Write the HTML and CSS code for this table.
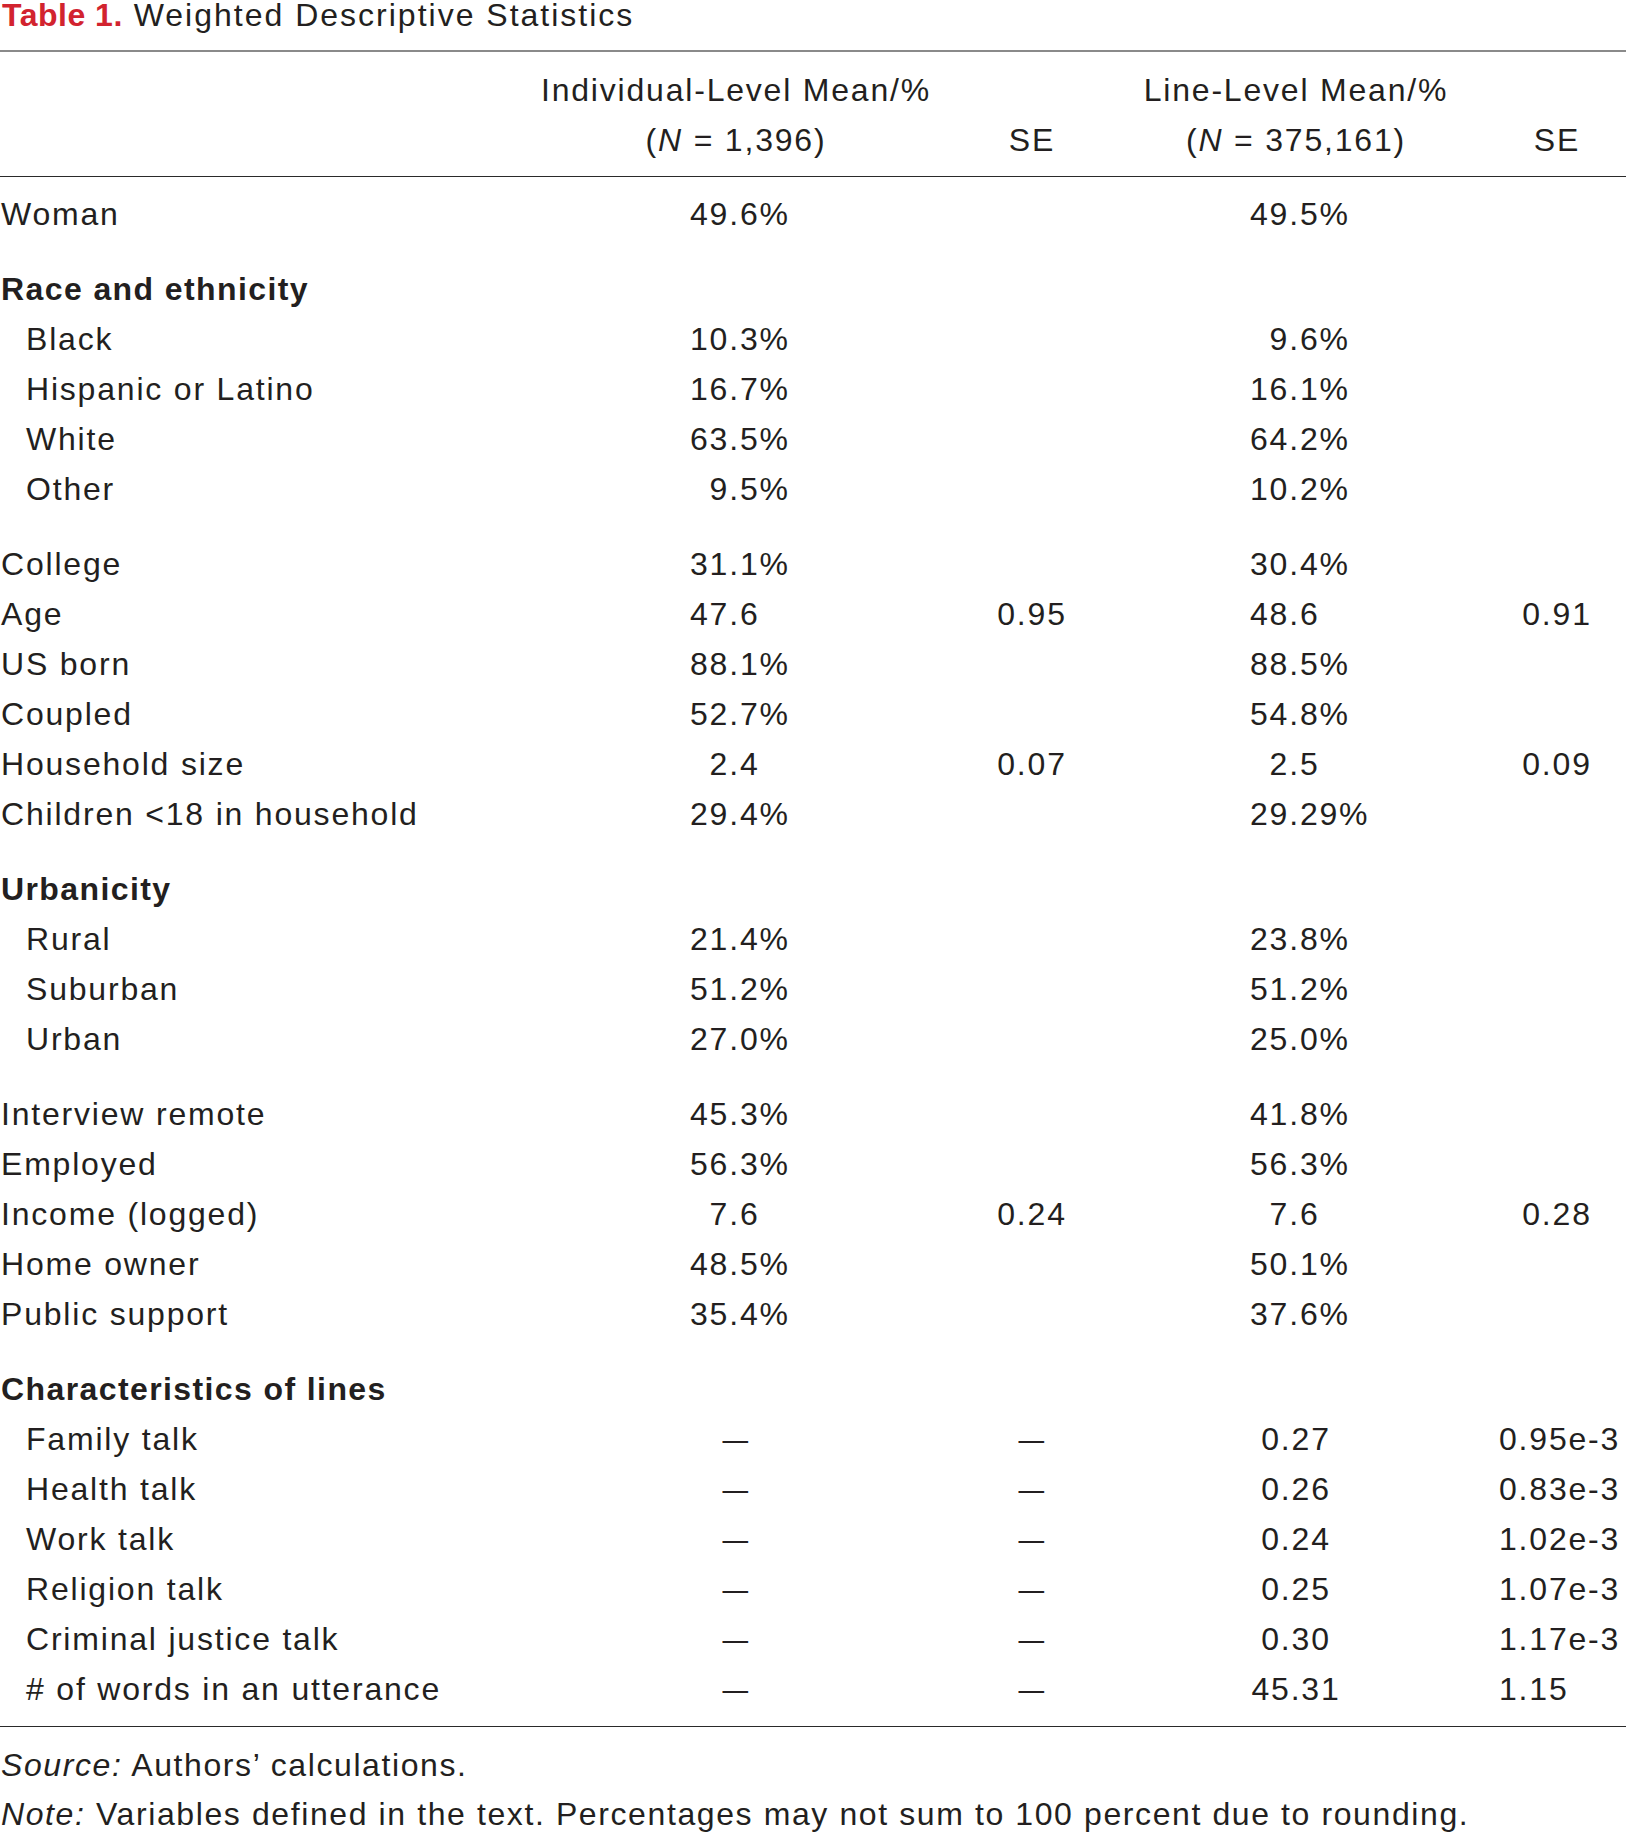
FILE: index.html
```html
<!DOCTYPE html>
<html lang="en">
<head>
<meta charset="utf-8">
<title>Table 1. Weighted Descriptive Statistics</title>
<link rel="stylesheet" href="styles.css">
</head>
<body>
<div class="page">
  <div class="title"><span class="tnum">Table 1.</span> Weighted Descriptive Statistics</div>

  <div class="thead">
    <div class="row">
      <div></div>
      <div class="hc">Individual-Level Mean/%</div>
      <div></div>
      <div class="hc">Line-Level Mean/%</div>
      <div></div>
    </div>
    <div class="row">
      <div></div>
      <div class="hc">(<i>N</i> = 1,396)</div>
      <div class="hc">SE</div>
      <div class="hc">(<i>N</i> = 375,161)</div>
      <div class="hc">SE</div>
    </div>
  </div>

  <div class="tbody">
    <div class="row"><div class="lab">Woman</div><div class="v1">49.6%</div><div class="se"></div><div class="v3">49.5%</div><div class="se"></div></div>

    <div class="row sep"><div class="lab grp">Race and ethnicity</div><div></div><div></div><div></div><div></div></div>
    <div class="row"><div class="lab sub">Black</div><div class="v1">10.3%</div><div class="se"></div><div class="v3 d1">9.6%</div><div class="se"></div></div>
    <div class="row"><div class="lab sub">Hispanic or Latino</div><div class="v1">16.7%</div><div class="se"></div><div class="v3">16.1%</div><div class="se"></div></div>
    <div class="row"><div class="lab sub">White</div><div class="v1">63.5%</div><div class="se"></div><div class="v3">64.2%</div><div class="se"></div></div>
    <div class="row"><div class="lab sub">Other</div><div class="v1 d1">9.5%</div><div class="se"></div><div class="v3">10.2%</div><div class="se"></div></div>

    <div class="row sep"><div class="lab">College</div><div class="v1">31.1%</div><div class="se"></div><div class="v3">30.4%</div><div class="se"></div></div>
    <div class="row"><div class="lab">Age</div><div class="v1">47.6</div><div class="se">0.95</div><div class="v3">48.6</div><div class="se">0.91</div></div>
    <div class="row"><div class="lab">US born</div><div class="v1">88.1%</div><div class="se"></div><div class="v3">88.5%</div><div class="se"></div></div>
    <div class="row"><div class="lab">Coupled</div><div class="v1">52.7%</div><div class="se"></div><div class="v3">54.8%</div><div class="se"></div></div>
    <div class="row"><div class="lab">Household size</div><div class="v1 d1">2.4</div><div class="se">0.07</div><div class="v3 d1">2.5</div><div class="se">0.09</div></div>
    <div class="row"><div class="lab">Children &lt;18 in household</div><div class="v1">29.4%</div><div class="se"></div><div class="v3">29.29%</div><div class="se"></div></div>

    <div class="row sep"><div class="lab grp">Urbanicity</div><div></div><div></div><div></div><div></div></div>
    <div class="row"><div class="lab sub">Rural</div><div class="v1">21.4%</div><div class="se"></div><div class="v3">23.8%</div><div class="se"></div></div>
    <div class="row"><div class="lab sub">Suburban</div><div class="v1">51.2%</div><div class="se"></div><div class="v3">51.2%</div><div class="se"></div></div>
    <div class="row"><div class="lab sub">Urban</div><div class="v1">27.0%</div><div class="se"></div><div class="v3">25.0%</div><div class="se"></div></div>

    <div class="row sep"><div class="lab">Interview remote</div><div class="v1">45.3%</div><div class="se"></div><div class="v3">41.8%</div><div class="se"></div></div>
    <div class="row"><div class="lab">Employed</div><div class="v1">56.3%</div><div class="se"></div><div class="v3">56.3%</div><div class="se"></div></div>
    <div class="row"><div class="lab">Income (logged)</div><div class="v1 d1">7.6</div><div class="se">0.24</div><div class="v3 d1">7.6</div><div class="se">0.28</div></div>
    <div class="row"><div class="lab">Home owner</div><div class="v1">48.5%</div><div class="se"></div><div class="v3">50.1%</div><div class="se"></div></div>
    <div class="row"><div class="lab">Public support</div><div class="v1">35.4%</div><div class="se"></div><div class="v3">37.6%</div><div class="se"></div></div>

    <div class="row sep"><div class="lab grp">Characteristics of lines</div><div></div><div></div><div></div><div></div></div>
    <div class="row"><div class="lab sub">Family talk</div><div class="c"><span class="dash">&mdash;</span></div><div class="c"><span class="dash">&mdash;</span></div><div class="c">0.27</div><div class="sel">0.95e-3</div></div>
    <div class="row"><div class="lab sub">Health talk</div><div class="c"><span class="dash">&mdash;</span></div><div class="c"><span class="dash">&mdash;</span></div><div class="c">0.26</div><div class="sel">0.83e-3</div></div>
    <div class="row"><div class="lab sub">Work talk</div><div class="c"><span class="dash">&mdash;</span></div><div class="c"><span class="dash">&mdash;</span></div><div class="c">0.24</div><div class="sel">1.02e-3</div></div>
    <div class="row"><div class="lab sub">Religion talk</div><div class="c"><span class="dash">&mdash;</span></div><div class="c"><span class="dash">&mdash;</span></div><div class="c">0.25</div><div class="sel">1.07e-3</div></div>
    <div class="row"><div class="lab sub">Criminal justice talk</div><div class="c"><span class="dash">&mdash;</span></div><div class="c"><span class="dash">&mdash;</span></div><div class="c">0.30</div><div class="sel">1.17e-3</div></div>
    <div class="row"><div class="lab sub"># of words in an utterance</div><div class="c"><span class="dash">&mdash;</span></div><div class="c"><span class="dash">&mdash;</span></div><div class="c">45.31</div><div class="sel">1.15</div></div>
  </div>

  <div class="notes">
    <p><i>Source:</i> Authors’ calculations.</p>
    <p><i>Note:</i> Variables defined in the text. Percentages may not sum to 100 percent due to rounding.</p>
  </div>
</div>
</body>
</html>
```

FILE: styles.css
```css
html, body {
  margin: 0;
  padding: 0;
  background: #ffffff;
}

body {
  font-family: "Liberation Sans", Arial, sans-serif;
  font-size: 32px;
  letter-spacing: 1.8px;
  color: #231f20;
}

.page {
  width: 1626px;
}

.title {
  line-height: 30px;
  height: 30px;
  padding-left: 2px;
  white-space: nowrap;
  letter-spacing: 2px;
}

.tnum {
  font-weight: bold;
  color: #d2232f;
  letter-spacing: 0.5px;
}

.thead {
  margin-top: 20px;
  border-top: 2px solid #8a8a8a;
  border-bottom: 1px solid #2a2a2a;
  padding-top: 13px;
  padding-bottom: 11px;
}

.tbody {
  padding-top: 12px;
  padding-bottom: 12px;
  border-bottom: 1px solid #2a2a2a;
}

.row {
  display: grid;
  grid-template-columns: 512px 448px 144px 384px 138px;
  height: 50px;
  line-height: 50px;
  white-space: nowrap;
}

.row.sep {
  margin-top: 25px;
}

.hc {
  text-align: center;
}

.lab {
  padding-left: 1px;
}

.lab.sub {
  padding-left: 26px;
}

.lab.grp {
  font-weight: bold;
  letter-spacing: 1.4px;
}

.v1 {
  padding-left: 178px;
}

.v3 {
  padding-left: 146px;
}

.d1 {
  margin-left: 19.6px;
}

.se,
.c {
  text-align: center;
}

.dash {
  display: inline-block;
  transform: scaleX(0.8);
}

.sel {
  padding-left: 11px;
}

.notes {
  margin-top: 14px;
  padding-left: 1px;
  letter-spacing: 1.6px;
}

.notes p {
  margin: 0;
  line-height: 49px;
  white-space: nowrap;
}
```
